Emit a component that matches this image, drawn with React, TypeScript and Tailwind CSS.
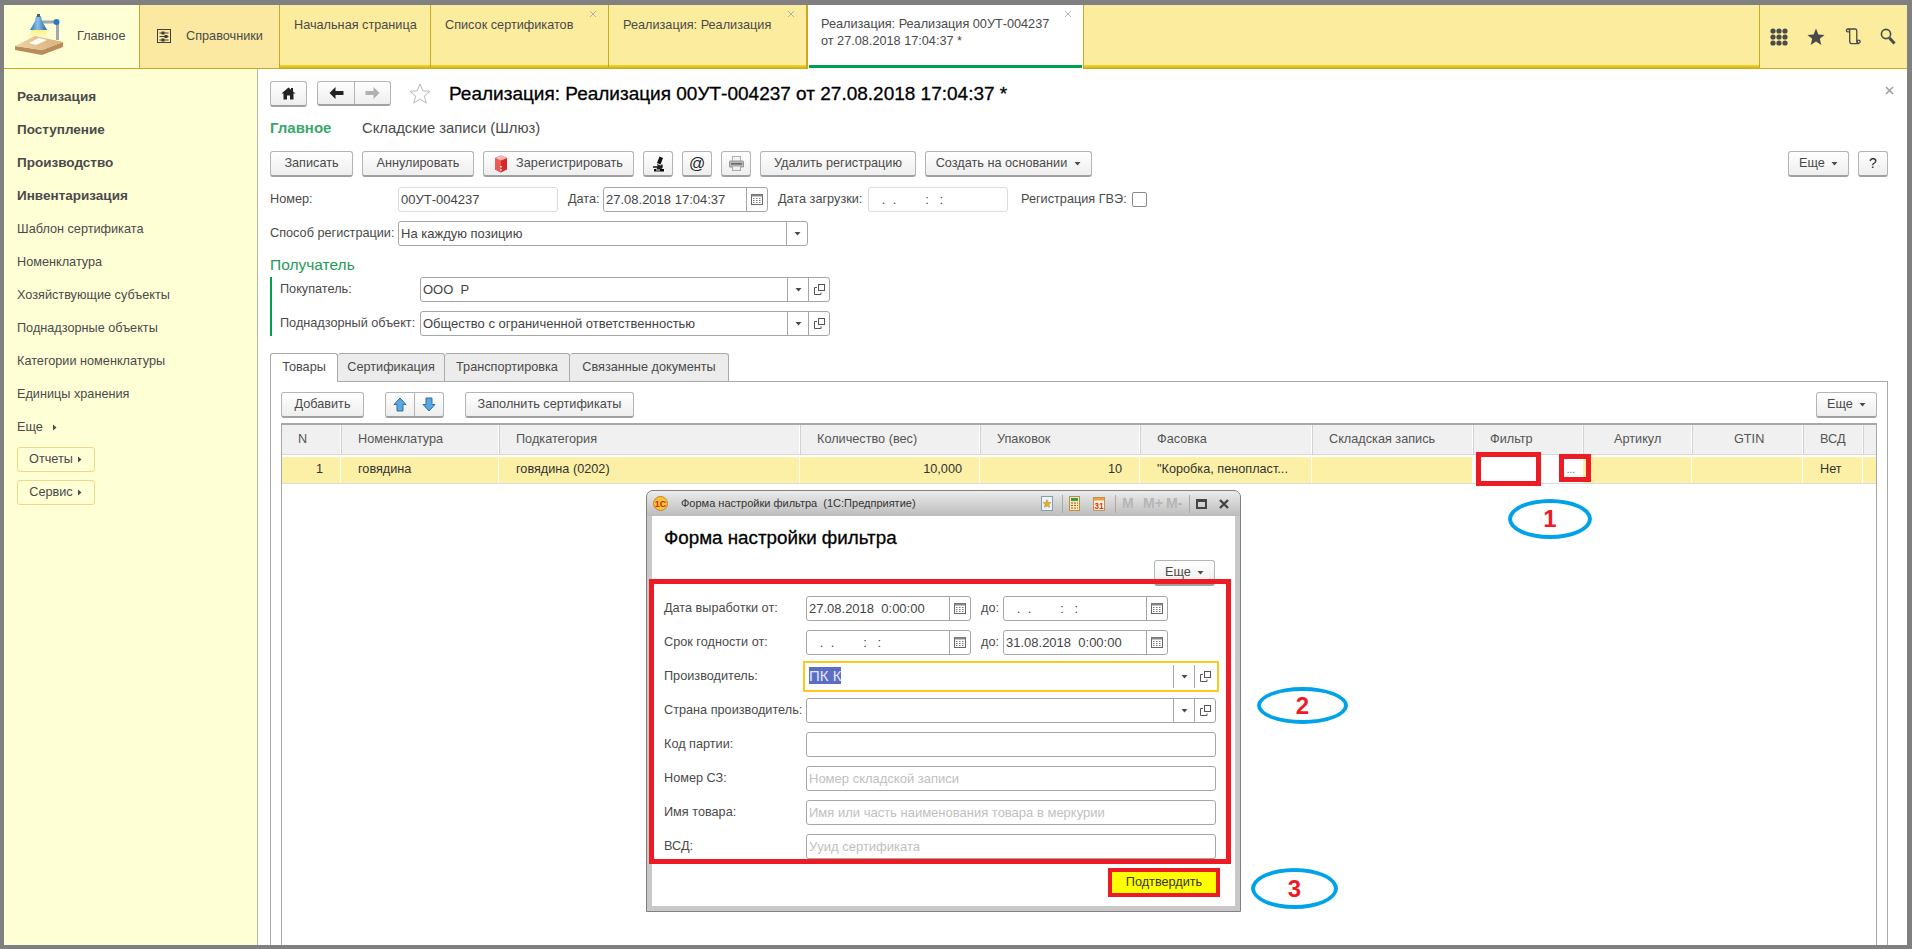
import React from "react";

const Tri = ({ right = false, className = "" }: { right?: boolean; className?: string }) => (
  <svg width="7" height="7" viewBox="0 0 7 7" className={className}>
    {right ? <path d="M2 0.5 L5.5 3.5 L2 6.5 Z" fill="#4a4a4a" /> : <path d="M0.5 2 L6.5 2 L3.5 5.5 Z" fill="#4a4a4a" />}
  </svg>
);

const Cal = () => (
  <svg width="12" height="11" viewBox="0 0 12 11">
    <rect x="0.5" y="0.5" width="11" height="10" fill="#fff" stroke="#666" />
    <rect x="0.5" y="0.5" width="11" height="2" fill="#888" />
    <path d="M2 4.5h1.5M5 4.5h1.5M8 4.5h1.5M2 6.5h1.5M5 6.5h1.5M8 6.5h1.5M2 8.5h1.5M5 8.5h1.5M8 8.5h1.5" stroke="#777" />
  </svg>
);

const OpenIco = () => (
  <svg width="11" height="12" viewBox="0 0 11 12">
    <rect x="4.5" y="0.5" width="6" height="6" fill="none" stroke="#555" />
    <path d="M3 3.5H0.5V10.5H7V8.5" fill="none" stroke="#555" />
  </svg>
);

const Btn = ({ className = "", children }: { className?: string; children: React.ReactNode }) => (
  <div className={`flex h-[26px] shrink-0 items-center justify-center rounded-[3px] border border-[#b4b4b4] border-b-[2px] border-b-[#a0a0a0] bg-linear-to-b from-white to-[#eeeeee] text-[#4a4a4a] ${className}`}>
    {children}
  </div>
);

const More = ({ className = "" }: { className?: string }) => (
  <Btn className={`w-[61px] gap-[6px] ${className}`}>
    <span>Еще</span>
    <Tri />
  </Btn>
);

const EMPTY_DATE = "   .  .        :   :";

const Field = ({
  className = "",
  text,
  placeholder,
  cal = false,
  drop = false,
  open = false,
  pale = false,
}: {
  className?: string;
  text?: string;
  placeholder?: string;
  cal?: boolean;
  drop?: boolean;
  open?: boolean;
  pale?: boolean;
}) => (
  <div className={`flex h-[25px] shrink-0 items-center rounded-[3px] border bg-white text-[13px] ${pale ? "border-[#dcdcdc]" : "border-[#a6a6a6]"} ${className}`}>
    <span className={`min-w-0 flex-1 truncate whitespace-pre pl-[2px] ${placeholder ? "text-[#c0c0c0]" : "text-[#444444]"}`}>{placeholder ?? text}</span>
    {cal && (
      <span className="flex h-full w-[21px] items-center justify-center border-l border-[#a6a6a6]">
        <Cal />
      </span>
    )}
    {drop && (
      <span className="flex h-full w-[21px] items-center justify-center border-l border-[#a6a6a6]">
        <Tri />
      </span>
    )}
    {open && (
      <span className="flex h-full w-[21px] items-center justify-center border-l border-[#a6a6a6]">
        <OpenIco />
      </span>
    )}
  </div>
);

const Label = ({ className = "", children }: { className?: string; children: React.ReactNode }) => (
  <span className={`shrink-0 whitespace-nowrap text-[#4a4a4a] ${className}`}>{children}</span>
);

const Logo = () => (
  <svg width="52" height="46" viewBox="0 0 52 46">
    <defs>
      <linearGradient id="beam" x1="0" y1="0" x2="0" y2="1">
        <stop offset="0" stopColor="#fdf06a" />
        <stop offset="1" stopColor="#fffbd0" stopOpacity="0.4" />
      </linearGradient>
      <linearGradient id="shade" x1="0" y1="0" x2="1" y2="0">
        <stop offset="0" stopColor="#2c78bb" />
        <stop offset="0.45" stopColor="#8cc0ea" />
        <stop offset="1" stopColor="#1f62a0" />
      </linearGradient>
      <linearGradient id="wood" x1="0" y1="0" x2="1" y2="0">
        <stop offset="0" stopColor="#f0d2a6" />
        <stop offset="1" stopColor="#d8b07c" />
      </linearGradient>
    </defs>
    <path d="M18 17 L31 17 L35 28 L13 28 Z" fill="url(#beam)" />
    <path d="M1 34 L28 38 L49 30 L49 35 L28 43 L1 38 Z" fill="#b98c5a" />
    <path d="M1 34 L21 24 L49 30 L28 38 Z" fill="url(#wood)" />
    <path d="M15 31 L25 26 L33 28 L22 33 Z" fill="#fffef2" />
    <path d="M43.5 28 V10 H26" fill="none" stroke="#a0a8b0" strokeWidth="3" />
    <circle cx="42.5" cy="10" r="3" fill="#2a78bd" />
    <path d="M22 4 L27 4 L28 9 L33 18 L16 18 L21 9 Z" fill="url(#shade)" />
    <rect x="23" y="2" width="3" height="3" fill="#44617c" />
  </svg>
);

const Sprav = () => (
  <svg width="15" height="15" viewBox="0 0 15 15" fill="none" stroke="#3f3f3f">
    <rect x="0.5" y="0.5" width="13" height="13" />
    <path d="M2.5 4h9M2.5 7.5h9M2.5 11h9" />
    <rect x="5" y="3" width="2" height="2" fill="#3f3f3f" />
    <rect x="8" y="6.5" width="2" height="2" fill="#3f3f3f" />
    <rect x="5" y="10" width="2" height="2" fill="#3f3f3f" />
  </svg>
);

const Stripe = () => <div className="h-[4px] shrink-0 bg-linear-to-b from-[#f8d926] to-[#c6a616]" />;

const CloseX = () => (
  <svg width="8" height="8" viewBox="0 0 8 8" className="shrink-0">
    <path d="M1 1 L7 7 M7 1 L1 7" stroke="#b0b0b0" strokeWidth="1" />
  </svg>
);

const Tab = ({ className, text, close = false }: { className: string; text: string; close?: boolean }) => (
  <div className={`flex shrink-0 flex-col border-r border-[#c8a91e] ${className}`}>
    <div className="flex flex-1 justify-between pl-[14px] pr-[11px] pt-[5px] text-[#4a4a4a]">
      <span className="mt-[7px] whitespace-nowrap leading-[17px]">{text}</span>
      {close && <CloseX />}
    </div>
    <Stripe />
  </div>
);

const navItems: [string, boolean][] = [
  ["Реализация", true],
  ["Поступление", true],
  ["Производство", true],
  ["Инвентаризация", true],
  ["Шаблон сертификата", false],
  ["Номенклатура", false],
  ["Хозяйствующие субъекты", false],
  ["Поднадзорные объекты", false],
  ["Категории номенклатуры", false],
  ["Единицы хранения", false],
];

const cols = "grid grid-cols-[59px_158px_301px_180px_160px_172px_161px_110px_109px_111px_60px_1fr]";

const Head = ({ children, className = "pl-[17px]" }: { children?: React.ReactNode; className?: string }) => (
  <div className={`flex items-center border-r border-white text-[#555555] shadow-[1px_0_0_#d0d0d0] ${className}`}>{children}</div>
);

const Cell = ({ children, right = false }: { children?: React.ReactNode; right?: boolean }) => (
  <div className={`flex items-center overflow-hidden whitespace-nowrap border-r border-white text-[#333333] ${right ? "justify-end pr-[17px]" : "pl-[17px]"}`}>{children}</div>
);

const Bubble = ({ className, n }: { className: string; n: string }) => (
  <div className={`absolute flex items-center justify-center rounded-[50%] border-[4px] border-[#00a2e8] bg-white text-[24px] font-bold leading-none text-[#ed1c24] ${className}`}>{n}</div>
);

const RedBox = ({ className }: { className: string }) => <div className={`pointer-events-none absolute border-[5px] border-[#ed1c24] ${className}`} />;

const FormRow = ({ label, children }: { label: string; children: React.ReactNode }) => (
  <div className="flex h-[25px] items-center">
    <Label className="w-[142px]">{label}</Label>
    {children}
  </div>
);

export default function App() {
  return (
    <div className="relative flex h-[949px] w-[1912px] flex-col overflow-hidden bg-[#808080] pb-[4px] pl-[4px] pr-[5px] pt-[5px] font-['Liberation_Sans',Arial,sans-serif] text-[12.7px]">
      <header className="flex h-[64px] shrink-0 bg-[#fcec9e]">
        <div className="flex w-[136px] shrink-0 items-center border-b border-r border-[#c8a91e] bg-[#ffffd6] pl-[10px] text-[#4a4a4a]">
          <span className="mb-[4px] mt-[1px] flex">
            <Logo />
          </span>
          <span className="ml-[11px]">Главное</span>
        </div>
        <div className="flex w-[140px] shrink-0 items-center border-b border-r border-[#c8a91e] bg-[#fbe9a1] pl-[17px] text-[#4a4a4a]">
          <Sprav />
          <span className="ml-[14px]">Справочники</span>
        </div>
        <Tab className="w-[151px]" text="Начальная страница" />
        <Tab className="w-[178px]" text="Список сертификатов" close />
        <Tab className="w-[198px]" text="Реализация: Реализация" close />
        <div className="flex w-[277px] shrink-0 flex-col border-x border-[#c8a91e] bg-white">
          <div className="flex flex-1 justify-between pl-[13px] pr-[11px] pt-[5px] text-[#4a4a4a]">
            <span className="mt-[6px] whitespace-nowrap leading-[17px]">
              Реализация: Реализация 00УТ-004237
              <br />
              от 27.08.2018 17:04:37 *
            </span>
            <CloseX />
          </div>
          <div className="mx-px mb-px h-[3px] bg-[#00a050]" />
        </div>
        <div className="flex flex-1 flex-col">
          <div className="flex-1" />
          <Stripe />
        </div>
        <div className="flex w-[148px] shrink-0 items-center gap-[19px] border-b border-l border-[#c8a91e] pl-[10px]">
          <svg width="18" height="18" viewBox="0 0 18 18" fill="#4a4a4a">
            {[3, 9, 15].flatMap((x) => [3, 9, 15].map((y) => <circle key={`${x}${y}`} cx={x} cy={y} r="2.6" />))}
          </svg>
          <svg width="18" height="18" viewBox="0 0 18 18" fill="#4a4a4a">
            <path d="M9 0.5 L11.4 6.5 L17.5 6.9 L12.8 10.8 L14.3 17 L9 13.6 L3.7 17 L5.2 10.8 L0.5 6.9 L6.6 6.5 Z" />
          </svg>
          <svg className="ml-[1px]" width="16" height="17" viewBox="0 0 17 18" fill="none" stroke="#4a4a4a" strokeWidth="1.4">
            <path d="M3 1 H11 C12 1 12.5 2 12.5 3 V14 C12.5 15.5 13.5 16.5 15 16.5 H7 C5.5 16.5 5 15.5 5 14 V3 C5 2 4 1 3 1 C1 1 1 4 3 4 H5" />
            <circle cx="14.5" cy="14.5" r="1.6" />
          </svg>
          <svg width="16" height="17" viewBox="0 0 16 17" fill="none" stroke="#4a4a4a">
            <circle cx="6" cy="6" r="4.6" strokeWidth="1.6" />
            <path d="M9.5 10 L14.5 15.5" strokeWidth="3" />
          </svg>
        </div>
      </header>

      <div className="flex min-h-0 flex-1">
        <aside className="flex w-[254px] shrink-0 flex-col border-r border-[#b5b5a5] bg-[#ffffd6] pl-[13px] pt-[12px] text-[#4a4a4a]">
          {navItems.map(([t, b]) => (
            <div key={t} className={`flex h-[33px] shrink-0 items-center ${b ? "text-[13.5px] font-bold" : ""}`}>
              {t}
            </div>
          ))}
          <div className="flex h-[33px] shrink-0 items-center gap-[8px]">
            Еще
            <Tri right />
          </div>
          <div className="mt-[3px] flex h-[25px] w-[78px] items-center justify-center gap-[3px] rounded-[3px] border border-[#ecd98a]">
            Отчеты
            <Tri right />
          </div>
          <div className="mt-[8px] flex h-[25px] w-[78px] items-center justify-center gap-[3px] rounded-[3px] border border-[#ecd98a]">
            Сервис
            <Tri right />
          </div>
        </aside>

        <main className="flex min-w-0 flex-1 flex-col bg-white pl-[12px] pr-[19px] pt-[12px]">
          <div className="flex h-[25px] shrink-0 items-center">
            <Btn className="h-[25px] w-[37px]">
              <svg width="15" height="13" viewBox="0 0 15 13" fill="#222">
                <path d="M7.5 0.5 L0.5 6.5 L2.5 6.5 V12.5 H6 V8.5 H9 V12.5 H12.5 V6.5 H14.5 L12 4.4 V1 H10 V2.7 Z" />
              </svg>
            </Btn>
            <div className="ml-[10px] flex h-[25px] w-[74px] rounded-[3px] border border-[#b4b4b4] border-b-[2px] border-b-[#a0a0a0] bg-linear-to-b from-white to-[#eeeeee]">
              <span className="flex w-[37px] items-center justify-center border-r border-[#b4b4b4]">
                <svg width="15" height="12" viewBox="0 0 15 12" fill="#222">
                  <path d="M6.5 0 L0.5 6 L6.5 12 V8 H14.5 V4 H6.5 Z" />
                </svg>
              </span>
              <span className="flex flex-1 items-center justify-center">
                <svg width="15" height="12" viewBox="0 0 15 12" fill="#b0b0b0">
                  <path d="M8.5 0 L14.5 6 L8.5 12 V8 H0.5 V4 H8.5 Z" />
                </svg>
              </span>
            </div>
            <svg className="ml-[18px]" width="22" height="21" viewBox="0 0 22 21" fill="#fff" stroke="#b8b8b8">
              <path d="M11 1 L13.8 7.8 L21 8.3 L15.4 12.9 L17.2 20 L11 16.1 L4.8 20 L6.6 12.9 L1 8.3 L8.2 7.8 Z" />
            </svg>
            <h1 className="ml-[18px] mt-[2px] whitespace-nowrap text-[19px] text-black [-webkit-text-stroke:0.3px_black]">Реализация: Реализация 00УТ-004237 от 27.08.2018 17:04:37 *</h1>
            <svg className="mb-[6px] ml-auto mr-[-6px]" width="9" height="9" viewBox="0 0 9 9">
              <path d="M1 1 L8 8 M8 1 L1 8" stroke="#a0a0a0" strokeWidth="1.6" />
            </svg>
          </div>

          <div className="mt-[12px] flex h-[20px] shrink-0 items-center">
            <span className="w-[92px] text-[15px] font-bold text-[#3aa76d]">Главное</span>
            <span className="text-[14.8px] text-[#4a4a4a]">Складские записи (Шлюз)</span>
          </div>

          <div className="mt-[13px] flex shrink-0 gap-[9px]">
            <Btn className="w-[83px]">Записать</Btn>
            <Btn className="w-[112px]">Аннулировать</Btn>
            <Btn className="w-[151px] gap-[8px]">
              <svg width="14" height="18" viewBox="0 0 14 18">
                <path d="M7 0.5 L13 3 V14.5 L7 17.5 L1 14.5 V3 Z" fill="#d42a2e" />
                <path d="M7 5.5 L1 3 V14.5 L7 17.5 Z" fill="#ee5a55" />
                <path d="M7 0.5 L13 3 L7 5.5 L1 3 Z" fill="#f6b8b0" />
                <path d="M7 11 V12.5 M7 14 V15.5" stroke="#fff" strokeWidth="1.4" />
              </svg>
              Зарегистрировать
            </Btn>
            <Btn className="w-[30px]">
              <svg width="15" height="16" viewBox="0 0 15 16">
                <rect x="1" y="13" width="13" height="3" fill="#fff" />
                <path d="M8.5 0.5 L12 2 L9.5 8.5 L6 7 Z" fill="#111" />
                <path d="M6 8 L9.5 9.5 L11 8 C12.5 10 12 12 10 13.5 H5 C6.5 12.5 7 10.5 6 8 Z" fill="#222" />
                <rect x="3" y="13" width="10" height="2.5" fill="#000" />
                <path d="M2 11 H7" stroke="#000" strokeWidth="1.4" />
                <path d="M5 14 H9" stroke="#fff" />
              </svg>
            </Btn>
            <Btn className="w-[30px] text-[16px] text-[#222222]">@</Btn>
            <Btn className="w-[30px]">
              <svg width="15" height="15" viewBox="0 0 15 15">
                <rect x="3.5" y="0.5" width="8" height="5" fill="#f4f4f4" stroke="#b0b0b0" />
                <path d="M1 5 H14 Q14.5 5 14.5 6 V11 H0.5 V6 Q0.5 5 1 5 Z" fill="#b8b8b8" stroke="#999" />
                <rect x="2" y="7" width="11" height="1.6" fill="#6a6a6a" />
                <rect x="3.5" y="10" width="8" height="4.5" fill="#f0f0f0" stroke="#a8a8a8" />
              </svg>
            </Btn>
            <Btn className="w-[156px]">Удалить регистрацию</Btn>
            <Btn className="w-[167px] gap-[7px]">
              Создать на основании
              <Tri />
            </Btn>
            <More className="ml-auto" />
            <Btn className="w-[30px] text-[14px] text-[#222222]">?</Btn>
          </div>

          <div className="mt-[10px] flex h-[25px] shrink-0 items-center">
            <Label className="w-[128px]">Номер:</Label>
            <Field className="w-[160px]" text="00УТ-004237" pale />
            <Label className="ml-[10px] w-[35px]">Дата:</Label>
            <Field className="w-[165px]" text="27.08.2018 17:04:37" cal />
            <Label className="ml-[10px] w-[90px]">Дата загрузки:</Label>
            <Field className="w-[140px]" text={EMPTY_DATE} pale />
            <Label className="ml-[13px] w-[111px]">Регистрация ГВЭ:</Label>
            <span className="h-[15px] w-[15px] rounded-[2px] border border-[#8a8a8a]" />
          </div>

          <div className="mt-[9px] flex h-[25px] shrink-0 items-center">
            <Label className="w-[128px]">Способ регистрации:</Label>
            <Field className="w-[410px]" text="На каждую позицию" drop />
          </div>

          <div className="mt-[9px] h-[20px] shrink-0 text-[15.5px] leading-[20px] text-[#1f9a57]">Получатель</div>

          <div className="mt-[2px] flex shrink-0 flex-col gap-[9px] border-l-2 border-[#00a050] pl-[8px]">
            <div className="flex items-center">
              <Label className="w-[140px]">Покупатель:</Label>
              <Field className="w-[410px]" text="ООО  Р" drop open />
            </div>
            <div className="flex items-center">
              <Label className="w-[140px]">Поднадзорный объект:</Label>
              <Field className="w-[410px]" text="Общество с ограниченной ответственностью" drop open />
            </div>
          </div>

          <div className="mt-[17px] flex h-[29px] shrink-0 items-stretch">
            <div className="z-10 flex h-[29px] w-[68px] items-center justify-center rounded-t-[3px] border-x border-t border-[#aaaaaa] bg-white text-[#4a4a4a]">Товары</div>
            <div className="flex h-[28px] w-[107px] items-center justify-center rounded-t-[3px] border-r border-t border-[#aaaaaa] bg-[#ececec] text-[#4a4a4a]">Сертификация</div>
            <div className="flex h-[28px] w-[125px] items-center justify-center rounded-t-[3px] border-r border-t border-[#aaaaaa] bg-[#ececec] text-[#4a4a4a]">Транспортировка</div>
            <div className="flex h-[28px] w-[159px] items-center justify-center rounded-t-[3px] border-r border-t border-[#aaaaaa] bg-[#ececec] text-[#4a4a4a]">Связанные документы</div>
          </div>

          <section className="-mt-px flex min-h-0 flex-1 flex-col border-x border-t border-[#aaaaaa] pl-[10px] pr-[10px] pt-[10px]">
            <div className="flex shrink-0">
              <Btn className="w-[83px]">Добавить</Btn>
              <div className="ml-[21px] flex h-[26px] w-[59px] rounded-[3px] border border-[#b4b4b4] border-b-[2px] border-b-[#a0a0a0] bg-linear-to-b from-white to-[#eeeeee]">
                <span className="flex w-[29px] items-center justify-center border-r border-[#b4b4b4]">
                  <svg width="14" height="15" viewBox="0 0 14 15">
                    <path d="M7 1 L13 7.5 H10 V14 H4 V7.5 H1 Z" fill="#5aa6e0" stroke="#2f6fa8" />
                  </svg>
                </span>
                <span className="flex flex-1 items-center justify-center">
                  <svg width="14" height="15" viewBox="0 0 14 15">
                    <path d="M7 14 L13 7.5 H10 V1 H4 V7.5 H1 Z" fill="#5aa6e0" stroke="#2f6fa8" />
                  </svg>
                </span>
              </div>
              <Btn className="ml-[21px] w-[169px]">Заполнить сертификаты</Btn>
              <More className="ml-auto" />
            </div>

            <div className="mt-[5px] flex min-h-0 flex-1 flex-col overflow-hidden border-x border-t-2 border-[#a8a8a8]">
              <div className={`${cols} h-[30px] shrink-0 border-b border-[#d8d8d8] bg-[#f0f0f0]`}>
                <Head className="pl-[16px]">N</Head>
                <Head>Номенклатура</Head>
                <Head>Подкатегория</Head>
                <Head>Количество (вес)</Head>
                <Head>Упаковок</Head>
                <Head>Фасовка</Head>
                <Head>Складская запись</Head>
                <Head>Фильтр</Head>
                <Head className="pl-[31px]">Артикул</Head>
                <Head className="pl-[42px]">GTIN</Head>
                <Head>ВСД</Head>
                <div />
              </div>
              <div className={`${cols} mt-px h-[27px] shrink-0 border-t border-white bg-[#fcefa6] shadow-[0_1px_0_#dcdcdc]`}>
                <Cell right>1</Cell>
                <Cell>говядина</Cell>
                <Cell>говядина (0202)</Cell>
                <Cell right>10,000</Cell>
                <Cell right>10</Cell>
                <Cell>"Коробка, пенопласт...</Cell>
                <Cell />
                <div className="flex items-center justify-end bg-white pb-[2px] pr-[8px] text-[10px] text-[#666666]">...</div>
                <Cell />
                <Cell />
                <Cell>Нет</Cell>
                <div />
              </div>
            </div>
          </section>
        </main>
      </div>

      <RedBox className="left-[1476px] top-[452px] h-[34px] w-[65px]" />
      <RedBox className="left-[1559px] top-[454px] h-[28px] w-[32px]" />
      <Bubble className="left-[1508px] top-[499px] h-[40px] w-[84px]" n="1" />
      <Bubble className="left-[1257px] top-[687px] h-[37px] w-[91px]" n="2" />
      <Bubble className="left-[1251px] top-[868px] h-[41px] w-[87px]" n="3" />

      <div className="absolute left-[646px] top-[490px] flex h-[422px] w-[595px] flex-col rounded-t-[7px] border border-[#808080] bg-[#c8c8c8] px-[5px] pb-[5px] text-[12.7px]">
        <div className="-mx-[5px] flex h-[25px] shrink-0 items-center rounded-t-[6px] bg-linear-to-b from-[#ececec] to-[#bcbcbc] pl-[6px] pr-[11px] text-[11px] text-[#333333]">
          <svg width="15" height="15" viewBox="0 0 15 15">
            <circle cx="7.5" cy="7.5" r="7" fill="#f6c23a" stroke="#c08a20" />
            <text x="7.5" y="11" textAnchor="middle" fontSize="9" fontWeight="bold" fill="#d3261e" fontFamily="Liberation Sans">1С</text>
          </svg>
          <span className="ml-[13px]">Форма настройки фильтра&nbsp; (1С:Предприятие)</span>
          <div className="ml-auto flex items-center">
            <svg width="12" height="15" viewBox="0 0 12 15">
              <rect x="0.5" y="0.5" width="11" height="14" fill="#eef4fb" stroke="#8a9ab0" />
              <path d="M6 3.5 L7.2 6.3 L10 6.5 L8 8.5 L8.7 11.5 L6 9.9 L3.3 11.5 L4 8.5 L2 6.5 L4.8 6.3 Z" fill="#e0b030" stroke="#a08020" strokeWidth="0.4" />
            </svg>
            <span className="ml-[9px] h-[18px] w-px bg-[#aaaaaa]" />
            <svg className="ml-[6px]" width="11" height="15" viewBox="0 0 11 15">
              <rect x="0.5" y="0.5" width="10" height="14" fill="#fbe7b0" stroke="#b89050" />
              <rect x="2" y="2" width="7" height="3" fill="#3a9a55" />
              <path d="M2 7h2M5 7h2M8 7h1M2 9.5h2M5 9.5h2M8 9.5h1M2 12h2M5 12h2M8 12h1" stroke="#a06030" />
            </svg>
            <svg className="ml-[13px]" width="12" height="15" viewBox="0 0 12 15">
              <rect x="0.5" y="1.5" width="11" height="13" fill="#fff6dc" stroke="#c09060" />
              <rect x="1" y="2" width="10" height="2.5" fill="#e8a040" />
              <text x="6" y="13" textAnchor="middle" fontSize="8.5" fontWeight="bold" fill="#e03020" fontFamily="Liberation Sans">31</text>
            </svg>
            <span className="ml-[10px] h-[18px] w-px bg-[#aaaaaa]" />
            <span className="ml-[6px] w-[11px] text-[14px] font-bold text-[#b5b5b5]">M</span>
            <span className="ml-[10px] w-[15px] whitespace-nowrap text-[14px] font-bold text-[#b5b5b5]">M+</span>
            <span className="ml-[8px] w-[15px] whitespace-nowrap text-[14px] font-bold text-[#b5b5b5]">M-</span>
            <span className="ml-[8px] h-[18px] w-px bg-[#aaaaaa]" />
            <span className="ml-[6px] h-[10px] w-[11px] border-[2px] border-t-[3px] border-[#444444]" />
            <svg className="ml-[12px]" width="10" height="10" viewBox="0 0 10 10">
              <path d="M1 1 L9 9 M9 1 L1 9" stroke="#444" strokeWidth="2.4" />
            </svg>
          </div>
        </div>

        <div className="flex min-h-0 flex-1 flex-col bg-white px-[12px]">
          <div className="mt-[12px] h-[20px] shrink-0 whitespace-nowrap text-[18.8px] leading-[20px] text-black [-webkit-text-stroke:0.3px_black]">Форма настройки фильтра</div>
          <More className="ml-auto mr-[8px] mt-[12px]" />
          <div className="mt-[10px] flex shrink-0 flex-col gap-[9px]">
            <FormRow label="Дата выработки от:">
              <Field className="w-[165px]" text="27.08.2018  0:00:00" cal />
              <Label className="ml-[10px] w-[22px]">до:</Label>
              <Field className="w-[165px]" text={EMPTY_DATE} cal />
            </FormRow>
            <FormRow label="Срок годности от:">
              <Field className="w-[165px]" text={EMPTY_DATE} cal />
              <Label className="ml-[10px] w-[22px]">до:</Label>
              <Field className="w-[165px]" text="31.08.2018  0:00:00" cal />
            </FormRow>
            <FormRow label="Производитель:">
              <div className="flex h-[25px] w-[410px] items-center outline-2 outline-offset-[1px] outline-[#ffc81e]">
                <span className="min-w-0 flex-1 pl-[3px] text-[15px]">
                  <span className="bg-[#5b6ec4] text-[#e3e7ff]">ПК К</span>
                </span>
                <span className="flex h-[23px] w-[21px] items-center justify-center border-l border-[#a6a6a6]">
                  <Tri />
                </span>
                <span className="flex h-[23px] w-[22px] items-center justify-center border-l border-[#a6a6a6]">
                  <OpenIco />
                </span>
              </div>
            </FormRow>
            <FormRow label="Страна производитель:">
              <Field className="w-[410px]" drop open />
            </FormRow>
            <FormRow label="Код партии:">
              <Field className="w-[410px]" />
            </FormRow>
            <FormRow label="Номер СЗ:">
              <Field className="w-[410px]" placeholder="Номер складской записи" />
            </FormRow>
            <FormRow label="Имя товара:">
              <Field className="w-[410px]" placeholder="Имя или часть наименования товара в меркурии" />
            </FormRow>
            <FormRow label="ВСД:">
              <Field className="w-[410px]" placeholder="Ууид сертификата" />
            </FormRow>
          </div>
          <div className="ml-auto mr-[3px] mt-[9px] flex h-[29px] w-[112px] items-center justify-center border-[4px] border-[#ed1c24] bg-[#ffff00] text-[#333333]">Подтвердить</div>
        </div>
      </div>
      <RedBox className="left-[649px] top-[579px] h-[285px] w-[582px]" />
    </div>
  );
}
